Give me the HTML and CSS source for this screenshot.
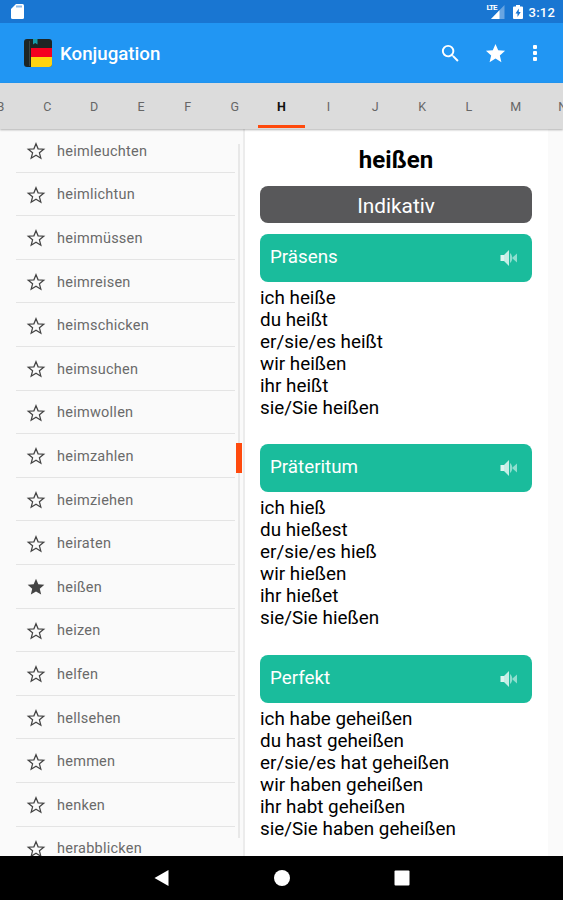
FILE: index.html
```html
<!DOCTYPE html>
<html lang="de">
<head>
    <meta charset="UTF-8">
    <meta name="viewport" content="width=device-width, initial-scale=1.0">
    <title>Konjugation</title>
    <link rel="stylesheet" href="styles.css">
</head>
<body>
    <svg class="symbols">
        <symbol id="star" viewBox="0 0 24 24">
            <path d="M12 17.27L18.18 21l-1.64-7.03L22 9.24l-7.19-.61L12 2 9.19 8.63 2 9.24l5.46 4.73L5.82 21z"/>
        </symbol>
        <symbol id="star-outline" viewBox="0 0 24 24">
            <path d="M12 3.200l2.500 6.200 6.800.5-5.200 4.300 1.700 6.500-5.800-3.600-5.800 3.600 1.700-6.500-5.200-4.300 6.800-.5z" fill="none" stroke="currentColor" stroke-width="1.500"/>
        </symbol>
        <symbol id="speaker" viewBox="0 0 18 18">
            <path d="M.5 6H4v6H.5z" opacity=".85"/>
            <path d="M4 6l5-5v16l-5-5z" opacity=".75"/>
            <path d="M10 4c3 2.500 3 7.500 0 10z" opacity=".5"/>
            <path d="M12.500 8.500L17 4.500v9l-4.500-4z" opacity=".5"/>
        </symbol>
    </svg>

    <div class="status-bar">
        <svg class="sd-card" viewBox="0 0 13 15"><path d="M5 0h6.500Q13 0 13 1.500v12Q13 15 11.500 15h-10Q0 15 0 13.500V5z"/><path class="pins" d="M5.500 1.500h1v2h-1zM7.500 1.500h1v2h-1zM9.500 1.500h1v2h-1z"/></svg>
        <div class="status-right">
            <div class="signal">
                <svg viewBox="0 0 18 14"><path d="M17.500 0v14H4z" opacity=".35"/><path d="M12.500 5.200V14H4z"/></svg>
                <span>LTE</span>
            </div>
            <svg class="battery" viewBox="0 0 10 14"><path d="M3 0h4v1.500h2q1 0 1 1V13q0 1-1 1H1q-1 0-1-1V2.500q0-1 1-1h2z"/><path class="bolt" d="M5.800 3.500L2.500 8.500h2v3.500l3.200-5h-1.900z"/></svg>
            <span class="clock">3:12</span>
        </div>
    </div>

    <header class="toolbar">
        <svg class="logo" viewBox="0 0 28 28">
            <rect width="28" height="28" rx="3" fill="#1d2524"/>
            <path d="M7 9h21v9H7z" fill="#f5001f"/>
            <path d="M7 18h21v7q0 3-3 3H7z" fill="#ffd40f"/>
            <path d="M5.500 2v25" stroke="#3a4341" stroke-width="1"/>
            <path d="M9 0h4.500v5.500L11.200 4 9 5.500z" fill="#159cab"/>
        </svg>
        <h1>Konjugation</h1>
        <svg class="icon search" viewBox="0 0 24 24"><path d="M15.500 14h-.79l-.28-.27A6.471 6.471 0 0 0 16 9.500 6.500 6.500 0 1 0 9.500 16c1.610 0 3.090-.59 4.230-1.570l.27.28v.79l5 4.990L20.490 19l-4.990-5zm-6 0C7.010 14 5 11.990 5 9.500S7.010 5 9.500 5 14 7.010 14 9.500 11.990 14 9.500 14z"/></svg>
        <svg class="icon favorites"><use href="#star"/></svg>
        <svg class="more" viewBox="0 0 4 16"><rect width="4" height="4" rx="1"/><rect y="6" width="4" height="4" rx="1"/><rect y="12" width="4" height="4" rx="1"/></svg>
    </header>

    <nav class="tabs">
        <span>B</span>
        <span>C</span>
        <span>D</span>
        <span>E</span>
        <span>F</span>
        <span>G</span>
        <span class="active">H</span>
        <span>I</span>
        <span>J</span>
        <span>K</span>
        <span>L</span>
        <span>M</span>
        <span>N</span>
    </nav>

    <main class="content">
        <div class="list-pane">
            <ul class="verbs">
                <li><svg><use href="#star-outline"/></svg>heimleuchten</li>
                <li><svg><use href="#star-outline"/></svg>heimlichtun</li>
                <li><svg><use href="#star-outline"/></svg>heimmüssen</li>
                <li><svg><use href="#star-outline"/></svg>heimreisen</li>
                <li><svg><use href="#star-outline"/></svg>heimschicken</li>
                <li><svg><use href="#star-outline"/></svg>heimsuchen</li>
                <li><svg><use href="#star-outline"/></svg>heimwollen</li>
                <li><svg><use href="#star-outline"/></svg>heimzahlen</li>
                <li><svg><use href="#star-outline"/></svg>heimziehen</li>
                <li><svg><use href="#star-outline"/></svg>heiraten</li>
                <li><svg><use href="#star"/></svg>heißen</li>
                <li><svg><use href="#star-outline"/></svg>heizen</li>
                <li><svg><use href="#star-outline"/></svg>helfen</li>
                <li><svg><use href="#star-outline"/></svg>hellsehen</li>
                <li><svg><use href="#star-outline"/></svg>hemmen</li>
                <li><svg><use href="#star-outline"/></svg>henken</li>
                <li><svg><use href="#star-outline"/></svg>herabblicken</li>
            </ul>
            <div class="scroll-track"><div class="scroll-thumb"></div></div>
        </div>

        <article class="detail">
            <h2>heißen</h2>
            <div class="mood">Indikativ</div>

            <section class="tense">
                <h3>Präsens <svg><use href="#speaker"/></svg></h3>
                <p>ich heiße</p>
                <p>du heißt</p>
                <p>er/sie/es heißt</p>
                <p>wir heißen</p>
                <p>ihr heißt</p>
                <p>sie/Sie heißen</p>
            </section>

            <section class="tense">
                <h3>Präteritum <svg><use href="#speaker"/></svg></h3>
                <p>ich hieß</p>
                <p>du hießest</p>
                <p>er/sie/es hieß</p>
                <p>wir hießen</p>
                <p>ihr hießet</p>
                <p>sie/Sie hießen</p>
            </section>

            <section class="tense">
                <h3>Perfekt <svg><use href="#speaker"/></svg></h3>
                <p>ich habe geheißen</p>
                <p>du hast geheißen</p>
                <p>er/sie/es hat geheißen</p>
                <p>wir haben geheißen</p>
                <p>ihr habt geheißen</p>
                <p>sie/Sie haben geheißen</p>
            </section>
        </article>
    </main>

    <footer class="nav-bar">
        <svg viewBox="0 0 16 16"><path d="M14.500 0v16L.5 8z"/></svg>
        <svg viewBox="0 0 16 16"><circle cx="8" cy="8" r="8"/></svg>
        <svg viewBox="0 0 16 16"><rect x=".5" y=".5" width="15" height="15" rx="1"/></svg>
    </footer>
</body>
</html>
```
FILE: styles.css
```css
:root {
    --blue: #2196f3;
    --blue-dark: #1976d2;
    --accent: #ff4a0d;
    --green: #1abc9c;
    --bg: #fafafa;
}

* {
    margin: 0;
    padding: 0;
    box-sizing: border-box;
}

body {
    height: 900px;
    display: flex;
    flex-direction: column;
    overflow: hidden;
    font-family: Roboto, sans-serif;
    background: var(--bg);
}

svg {
    display: block;
    flex: none;
    fill: currentColor;
}

.symbols {
    display: none;
}

.status-bar {
    flex: none;
    height: 23px;
    padding: 0 8px 0 11px;
    display: flex;
    align-items: center;
    justify-content: space-between;
    color: #fff;
    background: var(--blue-dark);
}

.sd-card {
    width: 13px;
    height: 15px;
}

.sd-card .pins,
.battery .bolt {
    fill: var(--blue-dark);
}

.status-right {
    display: flex;
    align-items: center;
    padding-top: 1px;
}

.signal {
    position: relative;
    margin-right: 8px;
}

.signal svg {
    width: 18px;
    height: 14px;
}

.signal span {
    position: absolute;
    left: 0;
    top: -1px;
    font-size: 8px;
    line-height: 8px;
    font-weight: 700;
    letter-spacing: -1px;
}

.battery {
    width: 10px;
    height: 14px;
    margin-right: 6px;
}

.clock {
    font-size: 13px;
    font-weight: 500;
    letter-spacing: 0.2px;
}

.toolbar {
    flex: none;
    height: 60px;
    padding: 0 26px 0 24px;
    display: flex;
    align-items: center;
    color: #fff;
    background: var(--blue);
}

.logo {
    width: 28px;
    height: 28px;
    margin-right: 8px;
}

.toolbar h1 {
    flex: 1;
    padding-top: 1px;
    font-size: 18.700px;
    font-weight: 500;
}

.icon {
    width: 23px;
    height: 23px;
}

.search {
    margin-right: 22px;
}

.favorites {
    margin-right: 26px;
}

.more {
    width: 4px;
    height: 16px;
}

.tabs {
    flex: none;
    position: relative;
    z-index: 1;
    height: 46px;
    display: flex;
    justify-content: center;
    color: #666;
    background: #dcdcdc;
    box-shadow: 0 1px 2px rgba(0, 0, 0, 0.3);
}

.tabs span {
    flex: none;
    width: 46.860px;
    height: 45px;
    font-size: 12.500px;
    line-height: 47px;
    text-align: center;
}

.tabs .active {
    color: #111;
    font-weight: 700;
    border-bottom: 3px solid var(--accent);
}

.content {
    flex: none;
    height: 727px;
    display: flex;
    overflow: hidden;
}

.list-pane {
    width: 245px;
    padding-left: 16px;
    display: flex;
    border-right: 2px solid #ececec;
}

.verbs {
    width: 219px;
    list-style: none;
}

.verbs li {
    height: 43.600px;
    padding: 2px 0 0 10px;
    display: flex;
    align-items: center;
    gap: 11px;
    font-size: 14.500px;
    letter-spacing: 0.250px;
    color: #6a6a6a;
    border-bottom: 1px solid #e4e4e4;
}

.verbs svg {
    width: 20px;
    height: 20px;
    color: #444;
}

.scroll-track {
    width: 2px;
    height: 694px;
    margin: 15px 0 0 3px;
    padding-top: 299px;
    background: #e8e8e8;
}

.scroll-thumb {
    width: 6px;
    height: 30px;
    margin-left: -2px;
    background: var(--accent);
}

.detail {
    width: 303px;
    padding: 15px 16px 0 15px;
    color: #000;
    background: #fff;
}

.detail h2 {
    height: 32px;
    margin-bottom: 10px;
    font-size: 24px;
    line-height: 33px;
    font-weight: 700;
    text-align: center;
}

.mood {
    height: 37px;
    margin-bottom: 11px;
    font-size: 20.800px;
    line-height: 40px;
    text-align: center;
    color: #fff;
    background: #58585a;
    border-radius: 8px;
}

.tense {
    margin-bottom: 25.400px;
}

.tense h3 {
    height: 48px;
    margin-bottom: 5px;
    padding: 0 14px 2px 10px;
    display: flex;
    align-items: center;
    justify-content: space-between;
    font-size: 18.800px;
    font-weight: 400;
    color: #fff;
    background: var(--green);
    border-radius: 8px;
}

.tense h3 svg {
    width: 18px;
    height: 18px;
    margin-top: 2px;
}

.tense p {
    font-size: 18.850px;
    line-height: 22px;
    white-space: nowrap;
}

.nav-bar {
    flex: 1;
    display: flex;
    align-items: center;
    justify-content: center;
    gap: 104px;
    color: #fff;
    background: #000;
}

.nav-bar svg {
    width: 16px;
    height: 16px;
}
```
